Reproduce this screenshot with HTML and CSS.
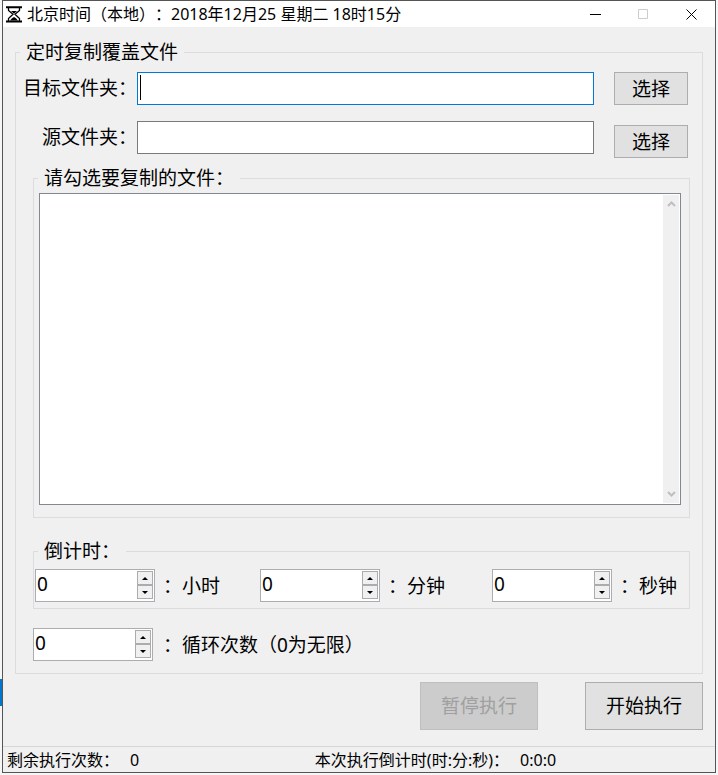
FILE: index.html
```html
<!DOCTYPE html>
<html lang="zh-CN">
<head>
<meta charset="utf-8">
<title>北京时间</title>
<link rel="stylesheet" href="styles.css">
</head>
<body>
<div class="window">
  <header class="titlebar">
    <svg class="app-icon" viewBox="0 0 16 17" aria-hidden="true">
      <path d="M0 1.2h16M0 15.5h16" stroke="#000" stroke-width="2"/>
      <path d="M2.500 2v2.500L7 8.300 2.500 12.500V15M13.500 2v2.500L9 8.300l4.500 4.200V15" fill="none" stroke="#000" stroke-width="1.300"/>
      <path d="M5 5h6L8 7.800zM4 14.500l2-2.300 2-1.200 2 1.200 2 2.300z" fill="#000"/>
    </svg>
    <h1 class="title">北京时间（本地）：2018年12月25 星期二 18时15分</h1>
    <div class="window-buttons">
      <button class="window-button" type="button" aria-label="最小化"><svg viewBox="0 0 11 11"><path d="M0 5.500h11"/></svg></button>
      <button class="window-button" type="button" aria-label="最大化" disabled><svg viewBox="0 0 11 11"><path d="M.5.5h9v9h-9z"/></svg></button>
      <button class="window-button" type="button" aria-label="关闭"><svg viewBox="0 0 11 11"><path d="M.5.5l10 10M10.500.5l-10 10"/></svg></button>
    </div>
  </header>

  <main class="content">
    <fieldset class="group group-main">
      <legend>定时复制覆盖文件</legend>
      <div class="path-row">
        <label for="target">目标文件夹：</label>
        <div class="path-field">
          <input class="path-input active" id="target" type="text">
          <span class="caret"></span>
        </div>
        <button class="button" type="button">选择</button>
      </div>
      <div class="path-row path-row-source">
        <label for="source">源文件夹：</label>
        <div class="path-field"><input class="path-input" id="source" type="text"></div>
        <button class="button" type="button">选择</button>
      </div>

      <fieldset class="group group-files">
        <legend>请勾选要复制的文件：</legend>
        <div class="file-list">
          <div class="file-items"></div>
          <div class="scrollbar">
            <svg viewBox="0 0 9 6"><path d="M1 5l3.500-3.500L8 5"/></svg>
            <svg viewBox="0 0 9 6"><path d="M1 1l3.500 3.500L8 1"/></svg>
          </div>
        </div>
      </fieldset>

      <fieldset class="group group-countdown">
        <legend>倒计时：</legend>
        <div class="countdown">
          <div class="number-field">
            <div class="spinner">
              <input id="hours" type="number" value="0" min="0">
              <div class="steps">
                <button type="button" aria-label="增加"><svg viewBox="0 0 6 3"><path d="M0 3l3-3 3 3z"/></svg></button>
                <button type="button" aria-label="减少"><svg viewBox="0 0 6 3"><path d="M0 0l3 3 3-3z"/></svg></button>
              </div>
            </div>
            <label for="hours">：小时</label>
          </div>
          <div class="number-field">
            <div class="spinner">
              <input id="minutes" type="number" value="0" min="0">
              <div class="steps">
                <button type="button" aria-label="增加"><svg viewBox="0 0 6 3"><path d="M0 3l3-3 3 3z"/></svg></button>
                <button type="button" aria-label="减少"><svg viewBox="0 0 6 3"><path d="M0 0l3 3 3-3z"/></svg></button>
              </div>
            </div>
            <label for="minutes">：分钟</label>
          </div>
          <div class="number-field">
            <div class="spinner">
              <input id="seconds" type="number" value="0" min="0">
              <div class="steps">
                <button type="button" aria-label="增加"><svg viewBox="0 0 6 3"><path d="M0 3l3-3 3 3z"/></svg></button>
                <button type="button" aria-label="减少"><svg viewBox="0 0 6 3"><path d="M0 0l3 3 3-3z"/></svg></button>
              </div>
            </div>
            <label for="seconds">：秒钟</label>
          </div>
        </div>
      </fieldset>

      <div class="number-field loops">
        <div class="spinner">
          <input id="loops" type="number" value="0" min="0">
          <div class="steps">
            <button type="button" aria-label="增加"><svg viewBox="0 0 6 3"><path d="M0 3l3-3 3 3z"/></svg></button>
            <button type="button" aria-label="减少"><svg viewBox="0 0 6 3"><path d="M0 0l3 3 3-3z"/></svg></button>
          </div>
        </div>
        <label for="loops">：循环次数（0为无限）</label>
      </div>
    </fieldset>

    <div class="actions">
      <button class="button button-large" type="button" disabled>暂停执行</button>
      <button class="button button-large" type="button">开始执行</button>
    </div>
  </main>

  <footer class="statusbar">
    <div class="status"><span>剩余执行次数：</span><span>0</span></div>
    <div class="status"><span>本次执行倒计时(时:分:秒)：</span><span>0:0:0</span></div>
  </footer>
</div>
</body>
</html>
```
FILE: styles.css
```css
* {
  box-sizing: border-box;
}

body {
  margin: 0;
  min-height: 100vh;
  padding: 0 2px 2px;
  display: flex;
  background: linear-gradient(#0078d0, #0078d0) 0 679px / 2px 27px no-repeat #f6f5f7;
  color: #000;
  font: 19px/26px "Noto Sans", "Noto Sans CJK SC", sans-serif;
  text-spacing-trim: space-all;
}

button,
input {
  font: inherit;
  color: inherit;
  margin: 0;
  border-radius: 0;
}

svg {
  display: block;
}

.window {
  flex: 1;
  min-width: 0;
  display: flex;
  flex-direction: column;
  border: 1px solid #555;
  background: #f0f0f0;
}

.titlebar {
  display: flex;
  align-items: center;
  height: 26px;
  padding-left: 3px;
  background: #fff;
}

.app-icon {
  width: 16px;
  height: 17px;
}

.title {
  flex: 1;
  margin: 0 0 0 5px;
  font-size: 16px;
  font-weight: 400;
  white-space: nowrap;
}

.window-buttons {
  display: flex;
}

.window-button {
  width: 48px;
  height: 26px;
  padding: 0;
  border: 0;
  background: none;
  display: grid;
  place-items: center;
}

.window-button svg {
  width: 11px;
  height: 11px;
  fill: none;
  stroke: #000;
}

.window-button:disabled svg {
  stroke: #ccc;
}

.content {
  flex: 1;
  display: flex;
  flex-direction: column;
  padding: 12px 12px 16px;
}

.group {
  min-width: 0;
  margin: 0;
  padding: 0 12px 0 var(--inset);
  border: 1px solid #dcdcdc;
}

/* Legends keep the same distance from the border whatever the group's inset */
.group > legend {
  margin-left: calc(4px - var(--inset));
  padding: 0 6px;
}

.group-main {
  --inset: 17px;
  flex: 1;
  display: flex;
  flex-direction: column;
  padding-top: 7px;
  padding-bottom: 12px;
}

.path-row {
  display: flex;
  margin-left: -10px;
  padding-right: 2px;
}

.path-row label {
  width: 114px;
  line-height: 33px;
  text-align: right;
}

.path-row-source {
  height: 37px;
  margin-top: 16px;
}

.path-row-source .button {
  align-self: flex-end;
}

.path-field {
  position: relative;
  flex: 1;
  margin-right: 20px;
}

.path-input {
  display: block;
  width: 100%;
  height: 33px;
  padding: 0 4px;
  border: 1px solid #7a7a7a;
  background: #fff;
  outline: 0;
}

.path-input.active {
  border-color: #0078d7;
}

.caret {
  position: absolute;
  top: 3px;
  left: 3px;
  width: 1px;
  height: 25px;
  background: #000;
}

.button {
  width: 74px;
  height: 33px;
  padding: 0;
  border: 1px solid #adadad;
  background: #e1e1e1;
}

.button-large {
  width: 118px;
  height: 48px;
}

.button:disabled {
  border-color: #bfbfbf;
  background: #ccc;
  color: #a0a0a0;
}

.group-files {
  --inset: 5px;
  flex: 1;
  display: flex;
  flex-direction: column;
  margin-top: 7px;
  padding-top: 2px;
  padding-right: 8px;
  padding-bottom: 12px;
}

.file-list {
  flex: 1;
  display: flex;
  min-height: 120px;
  padding: 1px;
  border: 1px solid #828790;
  background: #fff;
}

.file-items {
  flex: 1;
}

.scrollbar {
  width: 16px;
  display: flex;
  flex-direction: column;
  justify-content: space-between;
  align-items: center;
  padding: 6px 0;
  background: #f0f0f0;
}

.scrollbar svg {
  width: 9px;
  height: 6px;
  fill: none;
  stroke: #bfbfbf;
  stroke-width: 2;
}

.group-countdown {
  --inset: 1px;
  margin-top: 20px;
  padding-top: 5px;
  padding-bottom: 6px;
}

.countdown {
  display: grid;
  grid-template-columns: 225fr 232fr 185fr;
}

.number-field {
  display: flex;
  align-items: center;
  gap: 8px;
  white-space: nowrap;
}

.loops {
  gap: 10px;
  margin-top: 19px;
}

.spinner {
  display: flex;
  width: 120px;
  height: 33px;
  padding: 1px;
  border: 1px solid #abadb3;
  background: #fff;
}

.spinner input {
  flex: 1;
  min-width: 0;
  height: 26px;
  padding: 0;
  border: 0;
  outline: 0;
  background: none;
  appearance: textfield;
}

.spinner input::-webkit-inner-spin-button {
  appearance: none;
  margin: 0;
}

.steps {
  width: 16px;
  height: 28px;
  display: flex;
  flex-direction: column;
}

.steps button {
  flex: 1;
  padding: 0;
  border: 1px solid #acacac;
  background: #f0f0f0;
  display: grid;
  place-items: center;
}

.steps svg {
  width: 6px;
  height: 3px;
}

.actions {
  display: flex;
  justify-content: flex-end;
  gap: 47px;
  margin-top: 8px;
}

.statusbar {
  display: grid;
  grid-template-columns: 307fr 395fr;
  height: 26px;
  padding: 0 4px;
  border-top: 1px solid #d7d7d7;
  font-size: 16px;
}

.status {
  display: flex;
  gap: 11px;
  white-space: nowrap;
}
```
